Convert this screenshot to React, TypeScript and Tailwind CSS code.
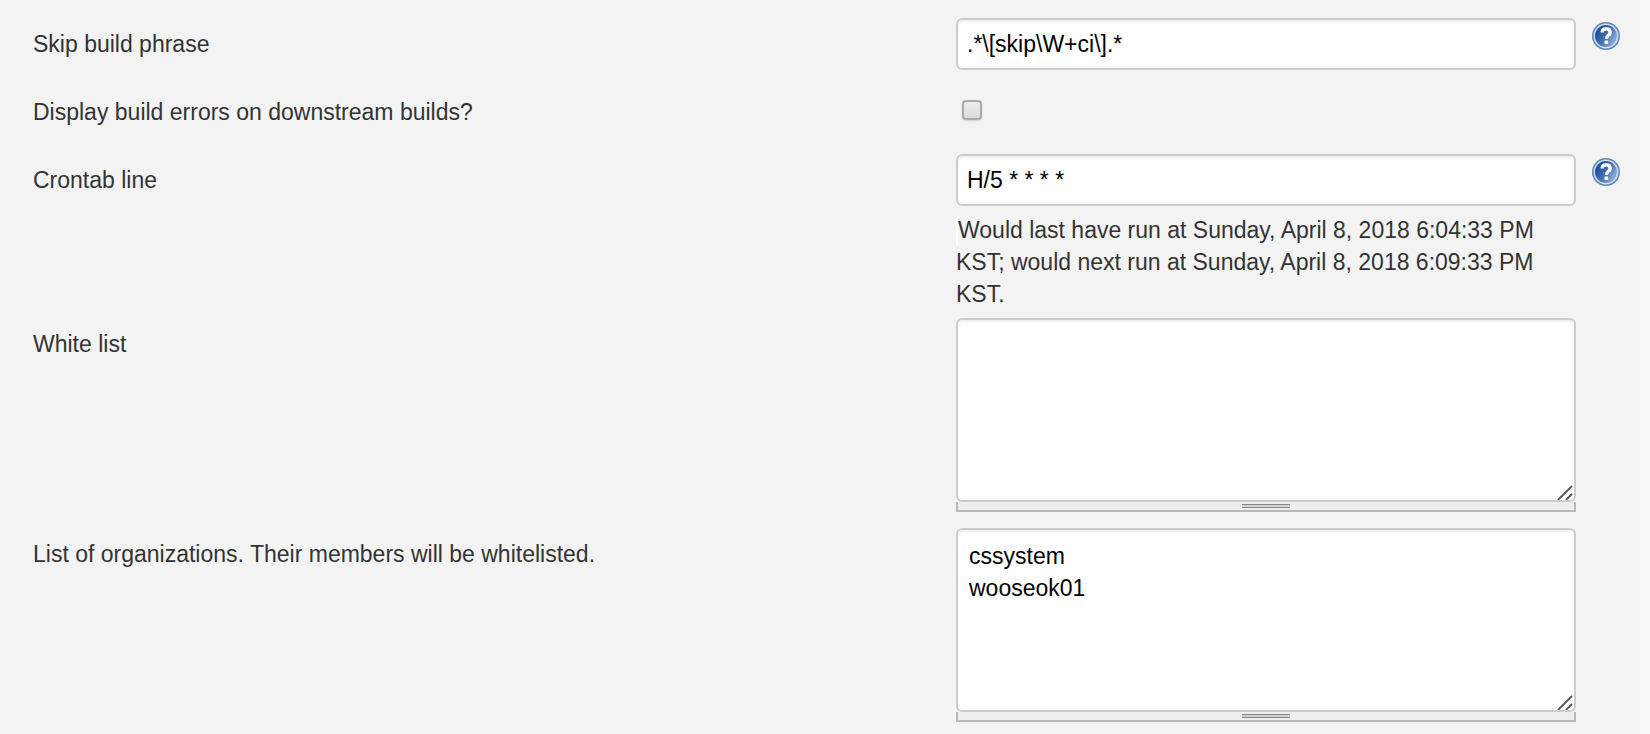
import type { ReactNode } from "react";

function HelpButton({ topic }: { topic: string }) {
  return (
    <button type="button" aria-label={`Help for feature: ${topic}`} className="mt-1 ml-4 block h-7 w-7 cursor-pointer">
      <svg viewBox="0 0 28 28" className="block h-7 w-7" aria-hidden="true">
        <defs>
          <linearGradient id="help-disc" x1="0.1" y1="0.3" x2="0.9" y2="0.8">
            <stop offset="0" stopColor="#1f4f97" />
            <stop offset="0.45" stopColor="#4370b0" />
            <stop offset="1" stopColor="#8fb0da" />
          </linearGradient>
        </defs>
        <circle cx="14" cy="14" r="14" fill="#6386b8" />
        <circle cx="14" cy="14" r="12.4" fill="#d3dfee" />
        <circle cx="14" cy="14" r="11" fill="url(#help-disc)" />
        <path
          d="M10.1 10.6c0-2.5 1.7-3.7 4-3.7s4.1 1.2 4.1 3.5c0 3-3.8 2.9-3.8 6.4"
          fill="none"
          stroke="#fff"
          strokeWidth="3.3"
        />
        <rect x="12.5" y="18.6" width="3.7" height="3.5" rx="0.8" fill="#fff" />
      </svg>
    </button>
  );
}

function Row({ id, label, help, children }: { id: string; label: string; help?: boolean; children: ReactNode }) {
  return (
    <div className="grid grid-cols-[minmax(0,923fr)_minmax(0,620fr)_64px] items-start">
      <label htmlFor={id} className="justify-self-start pt-[10px] pr-4">
        {label}
      </label>
      <div>{children}</div>
      {help && <HelpButton topic={label} />}
    </div>
  );
}

function TextInput({ id, value }: { id: string; value: string }) {
  return (
    <input
      id={id}
      type="text"
      defaultValue={value}
      className="block h-[52px] w-full rounded-md border-2 border-[#cccccc] bg-white px-[9px] text-black shadow-[inset_0_2px_3px_rgba(0,0,0,0.07)] outline-none"
    />
  );
}

function TextArea({ id, value }: { id: string; value: string }) {
  return (
    <div>
      <div className="relative">
        <textarea
          id={id}
          defaultValue={value}
          className="block h-[184px] w-full resize-none rounded-md border-2 border-[#cccccc] bg-white px-[11px] py-[10px] text-black shadow-[inset_0_2px_3px_rgba(0,0,0,0.07)] outline-none"
        />
        <svg viewBox="0 0 16 16" className="pointer-events-none absolute right-[3px] bottom-[2px] h-4 w-4" aria-hidden="true">
          <path d="M1 16 15 2M9 16l6-6" fill="none" stroke="#555" strokeWidth="1.8" />
        </svg>
      </div>
      <div className="flex h-[10px] cursor-row-resize justify-center border-x-2 border-b-2 border-[#b9b9b3] bg-[#eeeeee] pt-[2px]">
        <div className="h-1 w-12 border-y border-[#85858a] bg-[#d4d4ce]" />
      </div>
    </div>
  );
}

export default function App() {
  return (
    <div className="min-h-screen bg-[#f9f9f9] pr-[10px] font-['Liberation_Sans',Arial,sans-serif] text-[23px] leading-8 text-[#333333]">
      <form className="flex min-h-screen flex-col gap-4 bg-[#f3f3f3] pt-[18px] pb-3 pl-[33px]">
        <Row id="skip-phrase" label="Skip build phrase" help>
          <TextInput id="skip-phrase" value=".*\[skip\W+ci\].*" />
        </Row>
        <Row id="downstream-errors" label="Display build errors on downstream builds?">
          <div className="flex h-[52px] items-start pt-[14px] pl-[6px]">
            <input
              id="downstream-errors"
              type="checkbox"
              className="h-5 w-5 appearance-none rounded-[4px] border-2 border-[#a9a9a9] bg-linear-to-b from-[#ececec] to-[#dcdcdc] shadow-[0_1px_2px_rgba(0,0,0,0.15)] checked:from-[#8fb0da] checked:to-[#4370b0]"
            />
          </div>
        </Row>
        <div className="-mb-2">
          <Row id="crontab" label="Crontab line" help>
            <TextInput id="crontab" value="H/5 * * * *" />
            <p className="pt-2">
              <span className="inline-block h-7 w-[2px] bg-white align-middle" />
              Would last have run at Sunday, April 8, 2018 6:04:33 PM KST; would next run at Sunday, April 8, 2018 6:09:33 PM KST.
            </p>
          </Row>
        </div>
        <Row id="white-list" label="White list">
          <TextArea id="white-list" value="" />
        </Row>
        <Row id="organizations" label="List of organizations. Their members will be whitelisted.">
          <TextArea id="organizations" value={"cssystem\nwooseok01"} />
        </Row>
      </form>
    </div>
  );
}
